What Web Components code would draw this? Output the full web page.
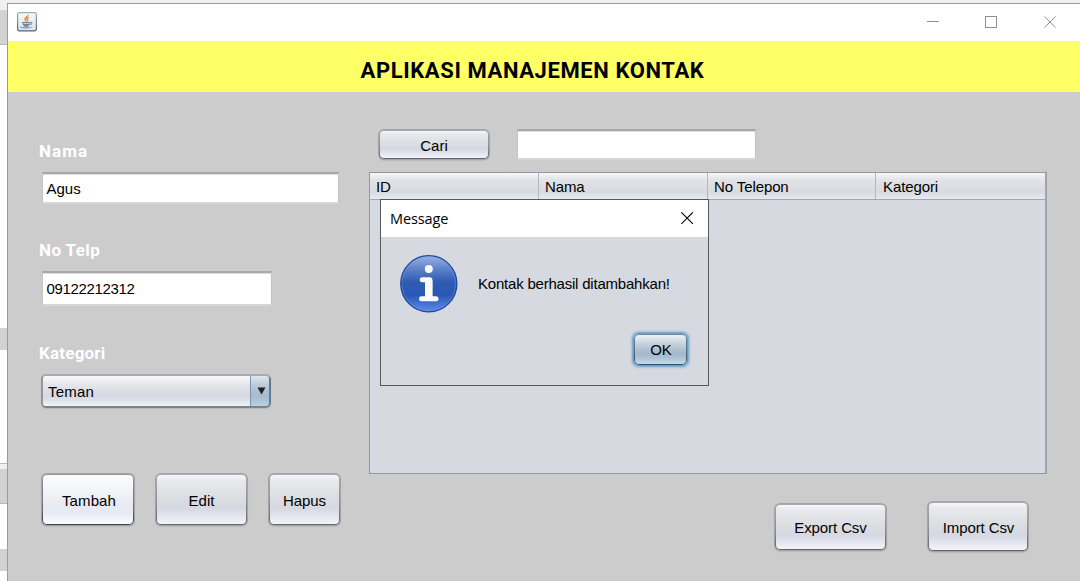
<!DOCTYPE html>
<html lang="id">
<head>
<meta charset="utf-8">
<title>Aplikasi Manajemen Kontak</title>
<style>
html, body { margin: 0; height: 100%; overflow: hidden; }
body { font: 15px/20px "Liberation Sans", Arial, sans-serif; color: #000; background: #fff; }
</style>
</head>
<body>
<kontak-app></kontak-app>
<script>
const define = (name, html) => {
  const tpl = document.createElement('template');
  tpl.innerHTML = html;
  customElements.define(name, class extends HTMLElement {
    constructor() {
      super();
      this.attachShadow({ mode: 'open' }).appendChild(tpl.content.cloneNode(true));
    }
  });
};

define('nimbus-button', `
<style>
:host { display: flex; flex: none; box-sizing: border-box; border-radius: 6px; padding: 1px; border: 1px solid rgba(110,112,120,.42);
  background: linear-gradient(#a9abb0, #8d8f96 55%, #62646b) padding-box; box-shadow: 0 1px 1px rgba(90,90,90,.15); }
span { flex: 1; display: flex; align-items: center; justify-content: center; border-radius: 4px; white-space: nowrap;
  padding-top: var(--drop, 2px); padding-left: var(--shift, 0);
  background: linear-gradient(#f6f7f9, #e8e9ec 12%, #dddfe3 42%, #d5d8e0 66%, #dddfea 78%, #f3f4fa); }
:host([hover]) { background: linear-gradient(#9194a0, #777a84 55%, #3c3f47) padding-box; }
:host([hover]) span { background: linear-gradient(#fcfcfe, #f2f3f7 35%, #e7eaf2 60%, #e7eaf2 75%, #fafbfd); }
:host([primary]) { background: linear-gradient(#718aa0, #56718a 50%, #344e66) padding-box; border-color: #6f9cc1; box-shadow: 0 0 0 1px #86b0d2, 0 0 2px 1.5px #a4c2da; }
:host([primary]) span { background: linear-gradient(#edf1f5, #c7d4df 28%, #b0c2d1 50%, #a4b9c9 64%, #aac1d6 78%, #c4daed); }
</style><span><slot></slot></span>`);

define('nimbus-field', `
<style>
:host { display: flex; flex: none; box-sizing: border-box; align-items: center; background: #fff;
  border: 1px solid #c5c5c5; border-top: 2px solid #a8a8a8; border-bottom: 2px solid #d6d6d6;
  box-shadow: inset 0 1px 1px #ddd; padding-left: 4px; white-space: nowrap; }
</style><slot></slot>`);

define('field-label', `
<style>
:host { display: block; height: 20px; font: bold 17px/20px Roboto, sans-serif; color: #fff; letter-spacing: var(--track, 1px); white-space: nowrap; }
</style><slot></slot>`);

define('nimbus-combo', `
<style>
:host { display: flex; flex: none; box-sizing: border-box; border-radius: 5px; overflow: hidden; border: 2px solid #94979e;
  border-top-color: #aaacb1; border-bottom-color: #808289; width: 230px; height: 34px; box-shadow: 0 1px 1px rgba(100,100,100,.2); border-right: 0; }
.v { flex: 1; padding-left: 5px; display: flex; align-items: center; padding-top: 2px; letter-spacing: .2px;
  background: linear-gradient(#f8f9fb, #e4e6ea 28%, #d9dce3 55%, #d5d9e2 70%, #f1f2f9); }
.a { width: 21px; margin: -2px 0; box-sizing: border-box; border: 2px solid #5f7c95; border-left: 1px solid #7896ae; border-top-color: #8198aa;
  border-radius: 0 5px 5px 0; display: flex; align-items: center; justify-content: center;
  background: linear-gradient(#e0e8ef, #bccbd8 30%, #a5bbcc 65%, #b8d0e5); }
svg { display: block; margin-left: 3px; }
</style>
<div class="v"><slot></slot></div><div class="a"><svg width="9" height="8" viewBox="0 0 9 8"><path d="M.5 .5h8L4.5 7.5z" fill="#202326"/></svg></div>`);

define('java-icon', `
<style>:host { display: block; width: 20px; height: 20px; } svg { display: block; }</style>
<svg width="20" height="20" viewBox="0 0 20 20" fill="none">
<defs><linearGradient id="g" x2="0" y2="1"><stop stop-color="#f8f8f8"/><stop offset="1" stop-color="#dfe2e5"/></linearGradient>
<linearGradient id="b" x2="0" y2="1"><stop stop-color="#9bb0c2"/><stop offset="1" stop-color="#48667f"/></linearGradient></defs>
<rect x=".6" y=".6" width="18.8" height="18.2" rx="1.7" fill="url(#g)" stroke="url(#b)" stroke-width="1.2"/>
<path d="M10.8 3c.4 1.8-3.6 2.6-2.7 4.5.3.7 1 1.1 1 2M11.8 5.2c-2 .8-2.2 1.5-1.3 2.5.4.5.2 1-.3 1.6" stroke="#ec8c45" stroke-width="1.5"/>
<path d="M4.9 10.6h8.6M5.6 12.1c2.2.7 4.8.7 7 0M6.6 13.5c1.7.6 3.5.6 5.1 0" stroke="#66879f" stroke-width="1.4"/>
<path d="M13.4 10.4c2.1-.6 1.9 1.9-.5 2.2M4.2 14.6c-1.2.8.5 1.3 4.8 1.3 3.8 0 5.8-.5 6-1.4" stroke="#7893a9" stroke-width="1.1"/>
</svg>`);

define('window-bar', `
<style>
:host { display: flex; flex: none; height: 37px; background: #fff; align-items: flex-start; justify-content: space-between; padding: 0 23px 0 9px; }
java-icon { margin-top: 8px; }
svg { display: block; margin-top: 12px; }
</style>
<java-icon></java-icon>
<svg width="130" height="13" viewBox="0 0 130 13" fill="none" stroke="#8f8f8f" shape-rendering="crispEdges"><path d="M0 5.5h12"/><path d="M58.5 .5h11v11h-11z"/><path d="M117.5 .5l11 11M128.5 .5l-11 11" shape-rendering="auto"/></svg>`);

define('app-banner', `
<style>
:host { display: flex; flex: none; height: 51px; background: #ff6; justify-content: center; box-sizing: border-box; padding: 17px 23px 0 0;
  font: bold 22px/26px Roboto, sans-serif; letter-spacing: .6px; white-space: nowrap; }
</style><slot></slot>`);

define('contact-form', `
<style>
:host { display: flex; flex-direction: column; flex: none; width: 361px; box-sizing: border-box; padding: 49px 0 0 31px; }
nimbus-field { margin-left: 2.5px; }
.f1 { width: 297px; height: 32px; margin-top: 11px; margin-bottom: 36px; padding-top: 1px; }
.f2 { width: 230px; height: 35px; margin-top: 11px; margin-bottom: 37px; letter-spacing: -.34px; }
nimbus-combo { margin: 11px 0 0 2px; }
.row { display: flex; margin: 65px 0 0 2px; }
nimbus-button { height: 53px; }
.b1 { width: 94px; --shift: 2px; letter-spacing: .1px; } .b2 { width: 93px; margin: 0 20px; } .b3 { width: 73px; letter-spacing: -.1px; }
.n { --track: 1.1px; } .t { --track: .4px; } .k { --track: .2px; }
</style>
<field-label class="n">Nama</field-label>
<nimbus-field class="f1">Agus</nimbus-field>
<field-label class="t">No Telp</field-label>
<nimbus-field class="f2">09122212312</nimbus-field>
<field-label class="k">Kategori</field-label>
<nimbus-combo>Teman</nimbus-combo>
<div class="row"><nimbus-button class="b1" hover>Tambah</nimbus-button><nimbus-button class="b2">Edit</nimbus-button><nimbus-button class="b3">Hapus</nimbus-button></div>`);

define('contact-table', `
<style>
:host { display: block; width: 678px; height: 302px; box-sizing: border-box; border: 1px solid #9297a1; border-right: 2px solid #a0a4ae; background: #d6d9e0; }
.h { display: grid; grid-template-columns: 169px 169px 168px 169px; height: 27px; box-sizing: border-box; border-bottom: 1px solid #a3a6ad;
  background: linear-gradient(#f6f7fa, #e2e4e8 25%, #dcdee3 52%, #d7dae1 72%, #e8eaf2); }
.h span { box-sizing: border-box; border-right: 1px solid #b4b7be; padding: 4px 0 0 6px; white-space: nowrap; letter-spacing: -.1px; }
.h span:last-child { border: 0; padding-left: 7px; }
</style>
<div class="h"><span>ID</span><span>Nama</span><span>No Telepon</span><span>Kategori</span></div>`);

define('contact-panel', `
<style>
:host { display: flex; flex-direction: column; flex: none; width: 711px; padding-top: 37px; }
.s { display: flex; padding-left: 9px; height: 43px; box-sizing: border-box; }
.s nimbus-button { width: 112px; height: 31px; margin-right: 27px; }
.s nimbus-field { width: 239px; height: 31px; }
.x { display: flex; justify-content: flex-end; align-items: center; margin-top: 27px; padding-right: 51px; gap: 40px; }
.e { width: 113px; height: 48px; letter-spacing: -.1px; } .i { width: 102px; height: 51px; --drop: 3px; --shift: 1px; letter-spacing: -.1px; }
</style>
<div class="s"><nimbus-button>Cari</nimbus-button><nimbus-field></nimbus-field></div>
<contact-table></contact-table>
<div class="x"><nimbus-button class="e">Export Csv</nimbus-button><nimbus-button class="i">Import Csv</nimbus-button></div>`);

define('info-icon', `
<style>:host { display: block; width: 58px; height: 58px; } svg { display: block; }</style>
<svg width="58" height="58" viewBox="0 0 58 58">
<defs><linearGradient id="g" x2="0" y2="1"><stop stop-color="#9db3e2"/><stop offset=".22" stop-color="#6185cb"/><stop offset=".47" stop-color="#2f5bb2"/><stop offset=".7" stop-color="#2a58b4"/><stop offset="1" stop-color="#5c8bea"/></linearGradient></defs>
<circle cx="28.8" cy="28.8" r="28.1" fill="url(#g)" stroke="#1f459c" stroke-width="1.2"/>
<circle cx="28.8" cy="28.8" r="26.8" fill="none" stroke="#7da0e4" stroke-opacity=".4"/>
<circle cx="28.8" cy="14" r="4" fill="#fafafa"/>
<path d="M22.3 24.8h7.6v19M21.5 43.8h14.5" fill="none" stroke="#fafafa" stroke-width="5" stroke-linecap="round" stroke-linejoin="round"/>
<path d="M25 25.5h7.4v18H25z" fill="#fafafa"/>
</svg>`);

define('message-dialog', `
<style>
:host { display: flex; flex-direction: column; box-sizing: border-box; width: 329px; height: 187px; border: 1px solid #55585e; background: #d6d9e0; }
.t { display: flex; justify-content: space-between; height: 37px; background: #fff; font: 14.5px/20px "Open Sans", sans-serif; padding: 0 14px 0 9px; }
.t span { margin-top: 9px; letter-spacing: -.12px; } .t svg { margin-top: 12px; display: block; }
.m { display: flex; align-items: center; padding: 18px 0 0 19px; gap: 20px; height: 58px; white-space: nowrap; letter-spacing: -.21px; }
.b { display: flex; justify-content: flex-end; padding: 20px 20px 0 0; }
nimbus-button { width: 55px; height: 33px; --drop: 1px; --shift: 1px; }
</style>
<div class="t"><span>Message</span><svg width="13" height="13" viewBox="0 0 13 13" stroke="#000" stroke-width="1.1"><path d="M.3 .3l11.6 11.6M11.9 .3l-11.6 11.6"/></svg></div>
<div class="m"><info-icon></info-icon><span><slot></slot></span></div>
<div class="b"><nimbus-button primary>OK</nimbus-button></div>`);

define('background-strip', `
<style>
:host { display: flex; flex-direction: column; width: 7px; flex: none; background: #fff; }
i { flex: none; box-sizing: border-box; background: #d2d2d2; }
</style>
<i style="height:7px;background:#f0f0f0"></i><i style="height:35px;border-bottom:1px solid #b5b5b5"></i>
<i style="height:283px;background:#fff"></i><i style="height:22px"></i><i style="height:113px;background:#fff"></i>
<i style="height:6px;background:#f0f0f0;border-top:1px solid #b9b9b9"></i><i style="height:35px;border-bottom:1px solid #b9b9b9"></i>
<i style="height:45px;background:#fff"></i><i style="height:22px"></i>`);

define('kontak-app', `
<style>
:host { display: flex; position: relative; width: 1080px; height: 581px; overflow: hidden; box-sizing: border-box; border-top: 3px solid #f0f0f0; }
.w { display: flex; flex-direction: column; width: 1073px; flex: none; box-sizing: border-box; border-left: 1px solid #9b9b9b; border-top: 1px solid #9b9b9b; background: #ccc; }
.c { display: flex; flex: 1; }
message-dialog { position: absolute; left: 380px; top: 196px; }
</style>
<background-strip></background-strip>
<div class="w"><window-bar></window-bar><app-banner>APLIKASI MANAJEMEN KONTAK</app-banner>
<div class="c"><contact-form></contact-form><contact-panel></contact-panel></div></div>
<message-dialog>Kontak berhasil ditambahkan!</message-dialog>`);
</script>
</body>
</html>
